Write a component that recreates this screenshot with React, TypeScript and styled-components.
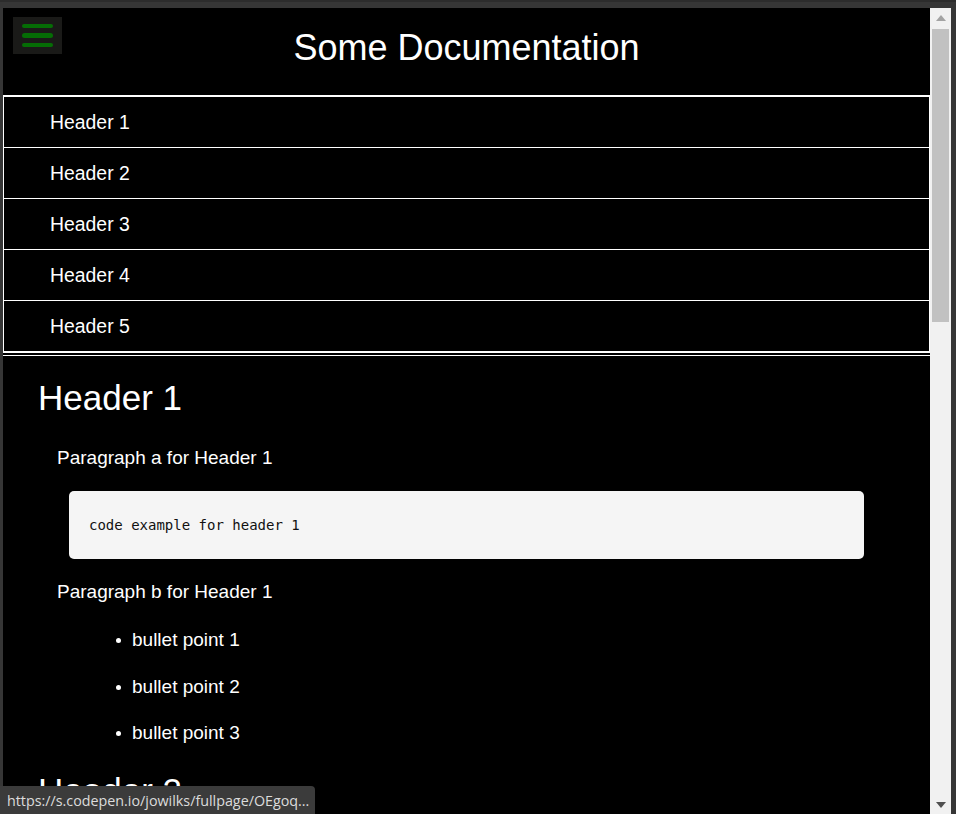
import React from "react";
import styled, { createGlobalStyle } from "styled-components";

const Global = createGlobalStyle`
  html, body { margin: 0; padding: 0; background: #333; overflow: hidden; }
  #root { width: 956px; height: 814px; }
`;

const Frame = styled.div`
  position: relative;
  width: 956px;
  height: 814px;
  display: flex;
  flex-direction: column;
  background: #333;
  overflow: hidden;
`;

const TopEdge = styled.div`
  height: 8px;
  flex: none;
  background: #363636;
  border-top: 2px solid #2c2c2c;
  box-sizing: border-box;
`;

const Body = styled.div`
  flex: 1;
  display: flex;
  min-height: 0;
`;

const SideEdge = styled.div<{ $w: number }>`
  width: ${(p) => p.$w}px;
  flex: none;
  background: #363636;
`;

const Viewport = styled.main`
  flex: 1;
  min-width: 0;
  background: #000;
  color: #fff;
  overflow: hidden;
  position: relative;
  font-family: "Liberation Sans", Arial, sans-serif;
`;

const Scrollbar = styled.div`
  width: 21px;
  flex: none;
  background: #f1f1f1;
  display: flex;
  flex-direction: column;
  align-items: center;
`;

const ArrowBox = styled.div`
  height: 19px;
  width: 100%;
  display: flex;
  align-items: center;
  justify-content: center;
  flex: none;
`;

const Thumb = styled.div`
  margin-top: 2px;
  width: 17px;
  height: 293px;
  background: #c1c1c1;
  flex: none;
`;

const Spacer = styled.div`
  flex: 1;
`;

const Header = styled.header`
  position: relative;
  height: 87px;
  box-sizing: border-box;
  padding-top: 20px;
  display: flex;
  justify-content: center;
`;

const MenuButton = styled.button`
  position: absolute;
  left: 10px;
  top: 9px;
  width: 49px;
  height: 37px;
  padding: 7px 9px;
  box-sizing: border-box;
  border: none;
  background: #1a1a18;
  display: flex;
  flex-direction: column;
  gap: 5px;
  cursor: pointer;
`;

const Bar = styled.span`
  display: block;
  width: 31px;
  height: 5px;
  border-radius: 3px;
  background: #056d05;
`;

const Title = styled.h1`
  margin: 0;
  font-size: 36px;
  line-height: 40px;
  font-weight: normal;
`;

const NavList = styled.ul`
  list-style: none;
  margin: 0;
  padding: 0;
  border-top: 2px solid #fff;
  border-left: 1px solid #fff;
  border-right: 1px solid #fff;
  border-bottom: 1px solid #fff;
`;

const NavItem = styled.li`
  height: 49px;
  padding-top: 1px;
  border-bottom: 1px solid #fff;
  display: flex;
  align-items: center;
  padding-left: 46px;
  font-size: 19.4px;
`;

const Main = styled.section`
  margin-top: 2px;
  border-top: 1px solid #fff;
  display: flex;
  flex-direction: column;
`;

const SectionTitle = styled.h2<{ $top: number }>`
  margin: ${(p) => p.$top}px 0 0 35px;
  font-size: 35px;
  line-height: 40px;
  font-weight: normal;
`;

const Para = styled.p<{ $top: number }>`
  margin: ${(p) => p.$top}px 0 0 54px;
  font-size: 19px;
  line-height: 22px;
`;

const CodeBlock = styled.pre`
  margin: 22px 66px 0 66px;
  height: 68px;
  box-sizing: border-box;
  padding: 0 20px;
  display: flex;
  align-items: center;
  background: #f5f5f5;
  border-radius: 5px;
  color: #111;
  font-family: "DejaVu Sans Mono", "Liberation Mono", monospace;
  font-size: 14px;
`;

const Bullets = styled.ul`
  margin: 26px 0 0 0;
  padding-left: 129px;
  list-style: none;
`;

const Bullet = styled.li`
  position: relative;
  font-size: 19px;
  line-height: 22px;
  & + & { margin-top: 24.5px; }
  &::before {
    content: "";
    position: absolute;
    left: -16px;
    top: 9px;
    width: 5px;
    height: 5px;
    border-radius: 50%;
    background: #fff;
  }
`;

const StatusBar = styled.div`
  position: absolute;
  left: 0;
  bottom: 0;
  width: 315px;
  height: 28px;
  box-sizing: border-box;
  padding-left: 7px;
  background: #3b3b3b;
  border-top-right-radius: 4px;
  color: #dcdcdc;
  font-family: "Open Sans", "Noto Sans", sans-serif;
  font-size: 14.3px;
  display: flex;
  align-items: center;
  white-space: nowrap;
  overflow: hidden;
`;

const Arrow = ({ up, color }: { up: boolean; color: string }) => (
  <svg width="10" height="6" viewBox="0 0 10 6">
    <polygon points={up ? "0,6 5,0 10,6" : "0,0 10,0 5,6"} fill={color} />
  </svg>
);

const navItems = ["Header 1", "Header 2", "Header 3", "Header 4", "Header 5"];

export default function App() {
  return (
    <>
      <Global />
      <Frame>
        <TopEdge />
        <Body>
          <SideEdge $w={3} />
          <Viewport>
            <Header>
              <MenuButton aria-label="menu">
                <Bar />
                <Bar />
                <Bar />
              </MenuButton>
              <Title>Some Documentation</Title>
            </Header>
            <nav>
              <NavList>
                {navItems.map((n) => (
                  <NavItem key={n}>{n}</NavItem>
                ))}
              </NavList>
            </nav>
            <Main>
              <SectionTitle $top={22}>Header 1</SectionTitle>
              <Para $top={29}>Paragraph a for Header 1</Para>
              <CodeBlock>code example for header 1</CodeBlock>
              <Para $top={22}>Paragraph b for Header 1</Para>
              <Bullets>
                <Bullet>bullet point 1</Bullet>
                <Bullet>bullet point 2</Bullet>
                <Bullet>bullet point 3</Bullet>
              </Bullets>
              <SectionTitle $top={27}>Header 2</SectionTitle>
              <Para $top={29}>Paragraph a for Header 2</Para>
            </Main>
          </Viewport>
          <Scrollbar>
            <ArrowBox>
              <Arrow up color="#a3a3a3" />
            </ArrowBox>
            <Thumb />
            <Spacer />
            <ArrowBox>
              <Arrow up={false} color="#505050" />
            </ArrowBox>
          </Scrollbar>
          <SideEdge $w={5} />
        </Body>
        <StatusBar>https://s.codepen.io/jowilks/fullpage/OEgoq...</StatusBar>
      </Frame>
    </>
  );
}
